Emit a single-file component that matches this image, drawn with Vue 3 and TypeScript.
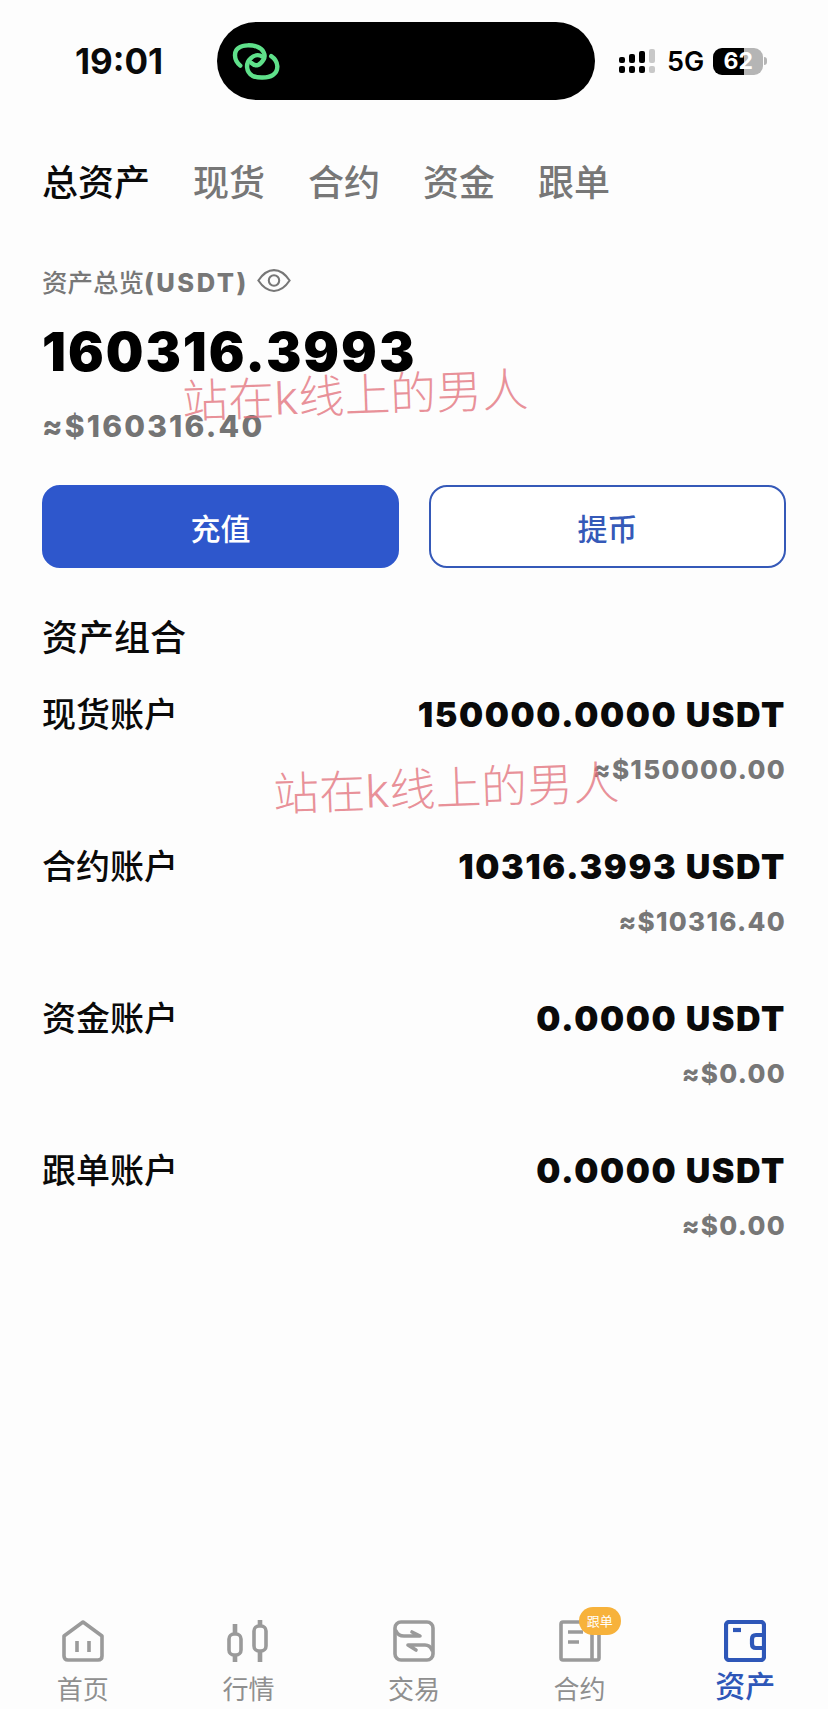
<script setup lang="ts">
interface Account {
  name: string
  amount: string
  usd: string
}

const tabs = ['总资产', '现货', '合约', '资金', '跟单']

const accounts: Account[] = [
  { name: '现货账户', amount: '150000.0000 USDT', usd: '≈$150000.00' },
  { name: '合约账户', amount: '10316.3993 USDT', usd: '≈$10316.40' },
  { name: '资金账户', amount: '0.0000 USDT', usd: '≈$0.00' },
  { name: '跟单账户', amount: '0.0000 USDT', usd: '≈$0.00' },
]
</script>

<template>
  <div class="page">
    <div class="status">
      <span class="status__time">19:01</span>
      <div class="status__island">
        <svg class="status__link" viewBox="60 30 170 130" fill="none" stroke="#5fe08a" stroke-width="14" stroke-linecap="round">
          <path d="M92 108 C70 90 70 60 90 50 C100 42 130 42 145 48 C165 55 175 75 165 90 C155 108 140 112 128 100" />
          <path d="M190 78 C215 95 215 125 195 138 C180 148 145 148 130 140 C110 128 108 100 125 85 C135 75 150 72 162 80" />
        </svg>
      </div>
      <div class="status__right">
        <svg class="status__signal" viewBox="0 0 36 25">
          <rect x="0" y="8" width="6" height="6" rx="2" fill="#000" />
          <rect x="0" y="17" width="6" height="7" rx="2" fill="#000" />
          <rect x="10" y="5" width="6" height="9" rx="2" fill="#000" />
          <rect x="10" y="17" width="6" height="7" rx="2" fill="#000" />
          <rect x="20" y="2" width="6" height="12" rx="2" fill="#000" />
          <rect x="20" y="17" width="6" height="7" rx="2" fill="#000" />
          <rect x="30" y="0" width="6" height="14" rx="2" fill="#c8c8c8" />
          <rect x="30" y="17" width="6" height="7" rx="2" fill="#c8c8c8" />
        </svg>
        <span class="status__net">5G</span>
        <div class="status__battery"><span>62</span></div>
        <span class="status__cap" />
      </div>
    </div>

    <div class="tabs">
      <span
        v-for="(tab, i) in tabs"
        :key="tab"
        class="tabs__item"
        :class="{ tabs__item_active: i === 0 }"
      >{{ tab }}</span>
    </div>

    <div class="overview">
      <div class="overview__label">
        <span>资产总览<span class="overview__unit">(USDT)</span></span>
        <svg class="overview__eye" viewBox="0 0 34 24" fill="none" stroke="#777" stroke-width="2">
          <path d="M2 12 C8 3 14 2 17 2 C20 2 26 3 32 12 C26 21 20 22 17 22 C14 22 8 21 2 12 Z" />
          <circle cx="17" cy="12" r="5" />
        </svg>
      </div>
      <div class="overview__total">160316.3993</div>
      <div class="overview__usd">≈$160316.40</div>
    </div>

    <div class="actions">
      <button class="actions__btn actions__btn_primary">充值</button>
      <button class="actions__btn">提币</button>
    </div>

    <h2 class="title">资产组合</h2>

    <div class="accounts">
      <div v-for="acc in accounts" :key="acc.name" class="account">
        <div class="account__top">
          <span class="account__name">{{ acc.name }}</span>
          <span class="account__amount">{{ acc.amount }}</span>
        </div>
        <div class="account__usd">{{ acc.usd }}</div>
      </div>
    </div>

    <nav class="nav">
      <div class="nav__item">
        <svg class="nav__icon" viewBox="0 0 42 42" fill="none" stroke="#9a9a9a" stroke-width="3.6" stroke-linejoin="round">
          <path d="M2 16 L21 2 L40 16 V36 Q40 40 36 40 H6 Q2 40 2 36 Z" />
          <path d="M15 21 V32 M27 21 V32" />
        </svg>
        <span>首页</span>
      </div>
      <div class="nav__item">
        <svg class="nav__icon" viewBox="0 0 42 42" fill="none" stroke="#9a9a9a" stroke-width="3.6" stroke-linejoin="round">
          <rect x="2" y="14" width="12" height="21" rx="5" />
          <path d="M8 4 V14 M8 35 V42" stroke-width="4.6" />
          <rect x="27" y="6" width="12" height="25" rx="5" />
          <path d="M33 0 V6 M33 31 V42" stroke-width="4.6" />
        </svg>
        <span>行情</span>
      </div>
      <div class="nav__item">
        <svg class="nav__icon" viewBox="0 0 42 42" fill="none" stroke="#9a9a9a" stroke-width="3.6" stroke-linejoin="round" stroke-linecap="round">
          <rect x="2" y="2" width="38" height="38" rx="6" />
          <path d="M3 11 Q5 16 11 16 H27 L19 12" />
          <path d="M39 30 Q37 25 32 25 H15 L23 30" />
        </svg>
        <span>交易</span>
      </div>
      <div class="nav__item">
        <svg class="nav__icon" viewBox="0 0 42 42" fill="none" stroke="#9a9a9a" stroke-width="3.6">
          <rect x="2" y="2" width="38" height="38" rx="2" />
          <path d="M33 2 V40" />
          <path d="M9 12 H24 M9 22 H20" />
        </svg>
        <span>合约</span>
        <span class="nav__badge">跟单</span>
      </div>
      <div class="nav__item nav__item_active">
        <svg class="nav__icon" viewBox="0 0 42 42" fill="none" stroke="#2e57b8" stroke-width="4.2" stroke-linejoin="round">
          <rect x="2" y="2" width="38" height="38" rx="3" />
          <path d="M9 10 H17" />
          <path d="M40 15 H32 Q28 15 28 19 V24 Q28 28 32 28 H40" />
        </svg>
        <span>资产</span>
      </div>
    </nav>

    <div class="mark mark_top">站在k线上的男人</div>
    <div class="mark mark_mid">站在k线上的男人</div>
  </div>
</template>

<style scoped>
.page {
  position: relative;
  display: flex;
  flex-direction: column;
  width: 828px;
  height: 1709px;
  overflow: hidden;
  background: #fdfdfd;
  color: #000;
  font-family: Inter, "Noto Sans CJK SC", sans-serif;
}

.status {
  display: flex;
  align-items: center;
  height: 78px;
  margin-top: 22px;
  padding-left: 75px;
}

.status__time {
  width: 142px;
  font-size: 35px;
  font-weight: 700;
  color: #0a0a0a;
}

.status__island {
  display: flex;
  align-items: center;
  width: 378px;
  height: 78px;
  padding-left: 13px;
  box-sizing: border-box;
  border-radius: 39px;
  background: #000;
}

.status__link {
  width: 54px;
  height: 41px;
}

.status__right {
  display: flex;
  align-items: center;
  margin-left: 24px;
}

.status__signal {
  width: 36px;
  height: 25px;
}

.status__net {
  margin-left: 12px;
  font-size: 27px;
  font-weight: 600;
}

.status__battery {
  display: flex;
  align-items: center;
  justify-content: center;
  width: 50px;
  height: 27px;
  margin-left: 9px;
  border-radius: 9px;
  background: linear-gradient(to right, #000 0 62%, #b5b5b5 62% 100%);
  color: #fff;
  font-size: 23px;
  font-weight: 700;
}

.status__cap {
  width: 3px;
  height: 8px;
  margin-left: 1px;
  border-radius: 0 3px 3px 0;
  background: #b5b5b5;
}

.tabs {
  display: flex;
  gap: 43px;
  margin-top: 59px;
  padding-left: 42px;
}

.tabs__item {
  font-size: 36px;
  line-height: 48px;
  font-weight: 500;
  color: #777;
}

.tabs__item_active {
  color: #0a0a0a;
}

.overview {
  margin-top: 55px;
  padding-left: 42px;
}

.overview__label {
  display: flex;
  align-items: center;
  height: 36px;
  font-size: 25.5px;
  font-weight: 500;
  color: #777;
}

.overview__unit {
  font-weight: 800;
  letter-spacing: 2.5px;
}

.overview__eye {
  width: 36px;
  height: 25px;
  margin-left: 7px;
}

.overview__total {
  margin-top: 22px;
  font-size: 53px;
  line-height: 64px;
  font-weight: 900;
  letter-spacing: 2px;
}

.overview__usd {
  margin-top: 24px;
  font-size: 30px;
  line-height: 36px;
  font-weight: 800;
  letter-spacing: 2.2px;
  color: #747474;
}

.actions {
  display: flex;
  gap: 30px;
  margin-top: 41px;
  padding: 0 42px;
}

.actions__btn {
  flex: 1;
  height: 83px;
  border: 2px solid #3559b8;
  border-radius: 18px;
  background: #fff;
  color: #3559b8;
  font-family: inherit;
  font-size: 30px;
  font-weight: 500;
}

.actions__btn_primary {
  border-color: #2e57cc;
  background: #2e57cc;
  color: #fff;
}

.title {
  margin: 46px 0 0;
  padding-left: 42px;
  font-size: 36px;
  line-height: 48px;
  font-weight: 500;
  color: #0a0a0a;
}

.accounts {
  display: flex;
  flex-direction: column;
  gap: 30px;
  margin-top: 28px;
  padding: 0 42px;
}

.account {
  height: 122px;
}

.account__top {
  display: flex;
  justify-content: space-between;
  align-items: center;
  height: 48px;
}

.account__name {
  margin-bottom: 4px;
  font-size: 34px;
  font-weight: 500;
  color: #0a0a0a;
}

.account__amount {
  font-size: 34px;
  font-weight: 900;
  letter-spacing: 1.6px;
  color: #0a0a0a;
}

.account__usd {
  margin-top: 14px;
  text-align: right;
  font-size: 26px;
  line-height: 36px;
  font-weight: 800;
  letter-spacing: 1.3px;
  color: #777;
}

.nav {
  display: grid;
  grid-template-columns: repeat(5, 1fr);
  margin-top: auto;
  height: 89px;
}

.nav__item {
  position: relative;
  display: flex;
  flex-direction: column;
  align-items: center;
  color: #8f8f8f;
  font-size: 26px;
  line-height: 34px;
}

.nav__icon {
  width: 42px;
  height: 42px;
  margin-bottom: 11px;
}

.nav__item_active {
  color: #2e57b8;
  font-size: 30px;
  font-weight: 500;
  line-height: 36px;
}

.nav__item_active .nav__icon {
  margin-bottom: 6px;
}

.nav__badge {
  position: absolute;
  top: -13px;
  left: 82px;
  width: 42px;
  height: 28px;
  border-radius: 14px;
  background: #f7b23b;
  color: #fff;
  text-align: center;
  font-size: 13px;
  line-height: 28px;
}

.mark {
  position: absolute;
  font-size: 46px;
  line-height: 56px;
  font-weight: 300;
  white-space: nowrap;
  color: rgba(226, 110, 120, 0.75);
  transform: rotate(-2deg);
}

.mark_top {
  left: 182px;
  top: 367px;
}

.mark_mid {
  left: 273px;
  top: 760px;
}
</style>
